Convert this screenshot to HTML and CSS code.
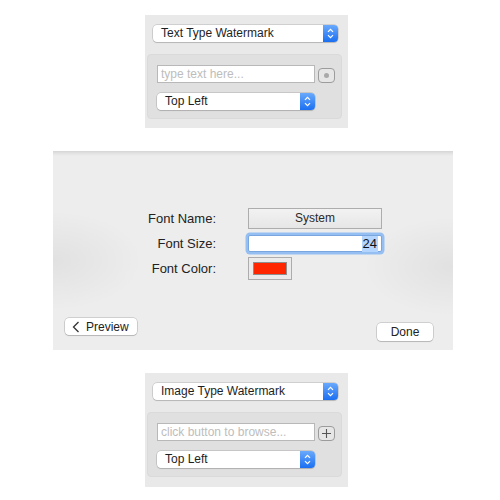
FILE: index.html
```html
<!DOCTYPE html>
<html>
<head>
<meta charset="utf-8">
<link rel="stylesheet" href="styles.css">
</head>
<body>
<div class="page">
  <section class="mini">
    <div class="popup wide">
      <span class="popup-label">Text Type Watermark</span>
      <span class="popup-arrows"><svg width="15" height="17" viewBox="0 0 15 17"><path d="M5 6.8 L7.5 4.3 L10 6.8 M5 10.2 L7.5 12.7 L10 10.2" fill="none" stroke="#fff" stroke-width="1.2"/></svg></span>
    </div>
    <div class="mini-box">
      <div class="field-row">
        <div class="textfield placeholder">type text here...</div>
        <div class="square-btn"><span class="dot"></span></div>
      </div>
      <div class="popup narrow">
        <span class="popup-label pos">Top Left</span>
        <span class="popup-arrows"><svg width="15" height="17" viewBox="0 0 15 17"><path d="M5 6.8 L7.5 4.3 L10 6.8 M5 10.2 L7.5 12.7 L10 10.2" fill="none" stroke="#fff" stroke-width="1.2"/></svg></span>
      </div>
    </div>
  </section>

  <section class="sheet">
    <div class="form">
      <div class="label row1">Font Name:</div>
      <div class="font-btn row1">System</div>
      <div class="label row2">Font Size:</div>
      <div class="size-field row2"><span class="sel">24</span></div>
      <div class="label row3">Font Color:</div>
      <div class="well row3"><span class="swatch"></span></div>
    </div>
    <div class="footer">
      <div class="btn preview"><svg width="8" height="12" viewBox="0 0 8 12"><path d="M6.5 1 L1.5 6 L6.5 11" fill="none" stroke="#333" stroke-width="1.3"/></svg><span>Preview</span></div>
      <div class="btn done">Done</div>
    </div>
  </section>

  <section class="mini third">
    <div class="popup wide">
      <span class="popup-label">Image Type Watermark</span>
      <span class="popup-arrows"><svg width="15" height="17" viewBox="0 0 15 17"><path d="M5 6.8 L7.5 4.3 L10 6.8 M5 10.2 L7.5 12.7 L10 10.2" fill="none" stroke="#fff" stroke-width="1.2"/></svg></span>
    </div>
    <div class="mini-box">
      <div class="field-row">
        <div class="textfield placeholder">click button to browse...</div>
        <div class="square-btn"><svg width="11" height="11" viewBox="0 0 11 11"><path d="M5.5 1 V10 M1 5.5 H10" stroke="#555" stroke-width="1.1"/></svg></div>
      </div>
      <div class="popup narrow">
        <span class="popup-label pos">Top Left</span>
        <span class="popup-arrows"><svg width="15" height="17" viewBox="0 0 15 17"><path d="M5 6.8 L7.5 4.3 L10 6.8 M5 10.2 L7.5 12.7 L10 10.2" fill="none" stroke="#fff" stroke-width="1.2"/></svg></span>
      </div>
    </div>
  </section>
</div>
</body>
</html>
```
FILE: styles.css
```css
html, body {
  margin: 0;
  padding: 0;
  background: #fff;
}
body {
  font-family: "Liberation Sans", Arial, sans-serif;
  color: #262626;
  width: 500px;
  height: 500px;
  overflow: hidden;
}
.page {
  padding-top: 15px;
}
.mini {
  margin-left: 145px;
  width: 203px;
  height: 113px;
  box-sizing: border-box;
  background: #e9e9e9;
  padding-top: 10px;
}
.mini.third {
  margin-top: 23px;
  height: 114px;
}
.popup {
  display: flex;
  align-items: stretch;
  height: 17px;
  box-sizing: border-box;
  background: #fff;
  border-radius: 4px;
  box-shadow: 0 0 0 0.5px rgba(0,0,0,0.22), 0 1px 1px rgba(0,0,0,0.12);
  overflow: hidden;
}
.popup.wide {
  margin-left: 8px;
  width: 185px;
}
.popup.narrow {
  width: 158px;
  margin-top: 10px;
}
.popup-label {
  flex: 1;
  font-size: 12px;
  line-height: 17px;
  padding-left: 8px;
  color: #1e1e1e;
  white-space: nowrap;
}
.popup-arrows {
  width: 15px;
  background: linear-gradient(#69a9fc, #1b6ff1);
  display: flex;
}
.mini-box {
  margin: 12px 6px 0 2px;
  height: 65px;
  box-sizing: border-box;
  background: #e0e0e0;
  border: 1px solid #dadada;
  border-radius: 4px;
  padding: 10px 0 0 9px;
}
.field-row {
  display: flex;
  align-items: center;
  gap: 3px;
}
.textfield {
  width: 158px;
  height: 18px;
  box-sizing: border-box;
  background: #fff;
  border: 1px solid #b8b8b8;
  font-size: 12px;
  line-height: 16px;
  padding-left: 3px;
  white-space: nowrap;
}
.placeholder {
  color: #bdbdbd;
}
.square-btn {
  width: 17px;
  height: 15px;
  box-sizing: border-box;
  border: 1px solid #9c9c9c;
  border-radius: 4px;
  background: #e6e6e6;
  display: flex;
  align-items: center;
  justify-content: center;
  margin-top: 2px;
}
.dot {
  width: 5px;
  height: 5px;
  border-radius: 50%;
  background: #a9a9a9;
}

.sheet {
  margin-top: 23px;
  margin-left: 53px;
  width: 400px;
  height: 199px;
  box-sizing: border-box;
  display: flex;
  flex-direction: column;
  padding-top: 57px;
  background:
    linear-gradient(to bottom, rgba(0,0,0,0.10) 0, rgba(0,0,0,0.03) 3px, rgba(0,0,0,0) 5px),
    radial-gradient(ellipse 90px 50px at 0% 55%, rgba(0,0,0,0.05), rgba(0,0,0,0)),
    radial-gradient(ellipse 90px 50px at 100% 58%, rgba(0,0,0,0.05), rgba(0,0,0,0)),
    #ededed;
}
.form {
  display: grid;
  grid-template-columns: 163px 134px;
  grid-template-rows: 21px 18px 23px;
  column-gap: 32px;
  row-gap: 5px;
}
.label {
  font-size: 13px;
  text-align: right;
  display: flex;
  align-items: center;
  justify-content: flex-end;
  color: #222;
}
.form .row2.label, .form .size-field { margin-top: 1px; }
.font-btn {
  box-sizing: border-box;
  border: 1px solid #adadad;
  background: linear-gradient(#f2f2f2, #e6e6e6);
  font-size: 12px;
  line-height: 19px;
  text-align: center;
  color: #2a2a2a;
}
.size-field {
  box-sizing: border-box;
  background: #fff;
  border: 1px solid #7aa6e0;
  box-shadow: 0 0 0 2.5px #95bff2;
  border-radius: 2px;
  display: flex;
  justify-content: flex-end;
  align-items: center;
  padding-right: 3px;
}
.sel {
  background: #b4d5fe;
  font-size: 13px;
  line-height: 16px;
  color: #111;
  padding: 0 1px;
}
.well {
  width: 44px;
  box-sizing: border-box;
  border: 1px solid #acacac;
  background: #ebebeb;
  padding: 4px 4px;
}
.swatch {
  display: block;
  height: 13px;
  box-sizing: border-box;
  border: 1px solid #8e8e8e;
  background: #ff2600;
}
.footer {
  margin-top: auto;
  display: flex;
  justify-content: space-between;
  align-items: flex-start;
  padding: 0 20px 9px 12px;
}
.btn {
  box-sizing: border-box;
  background: #fff;
  border-radius: 4px;
  box-shadow: 0 0 0 0.5px rgba(0,0,0,0.25), 0 1px 1px rgba(0,0,0,0.12);
  font-size: 12px;
  color: #222;
  display: flex;
  align-items: center;
}
.preview {
  width: 72px;
  height: 17px;
  padding-left: 7px;
  gap: 6px;
}
.done {
  width: 56px;
  height: 18px;
  margin-top: 5px;
  justify-content: center;
}
```
